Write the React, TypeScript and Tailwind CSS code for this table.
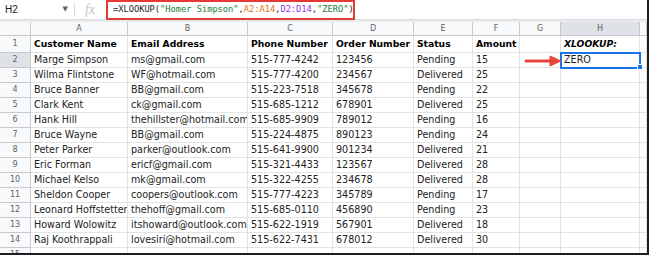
import React from "react";

const cols = ["A", "B", "C", "D", "E", "F", "G", "H", ""];

const rows: string[][] = [
  ["Marge Simpson", "ms@gmail.com", "515-777-4242", "123456", "Pending", "15"],
  ["Wilma Flintstone", "WF@hotmail.com", "515-777-4200", "234567", "Delivered", "25"],
  ["Bruce Banner", "BB@gmail.com", "515-223-7518", "345678", "Pending", "22"],
  ["Clark Kent", "ck@gmail.com", "515-685-1212", "678901", "Delivered", "25"],
  ["Hank Hill", "thehillster@hotmail.com", "515-685-9909", "789012", "Pending", "16"],
  ["Bruce Wayne", "BB@gmail.com", "515-224-4875", "890123", "Pending", "24"],
  ["Peter Parker", "parker@outlook.com", "515-641-9900", "901234", "Delivered", "21"],
  ["Eric Forman", "ericf@gmail.com", "515-321-4433", "123567", "Delivered", "28"],
  ["Michael Kelso", "mk@gmail.com", "515-322-4255", "234678", "Delivered", "28"],
  ["Sheldon Cooper", "coopers@outlook.com", "515-777-4223", "345789", "Pending", "17"],
  ["Leonard Hoffstetter", "thehoff@gmail.com", "515-685-0110", "456890", "Pending", "23"],
  ["Howard Wolowitz", "itshoward@outlook.com", "515-622-1919", "567901", "Delivered", "18"],
  ["Raj Koothrappali", "lovesiri@hotmail.com", "515-622-7431", "678012", "Delivered", "30"],
];

const headers = ["Customer Name", "Email Address", "Phone Number", "Order Number", "Status", "Amount"];

const gridCols = "grid grid-cols-[31px_97px_120px_85px_81px_59px_47px_41px_79px_1fr]";

const Cell: React.FC<{ children?: React.ReactNode; className?: string }> = ({ children, className = "" }) => (
  <div className={`border-r border-b border-[#e2e3e3] pl-[3px] flex items-center whitespace-nowrap overflow-hidden ${className}`}>
    {children}
  </div>
);

const RowNum: React.FC<{ n: number; active?: boolean }> = ({ n, active }) => (
  <div
    className={`border-r border-b border-[#c7c9cc] flex items-center justify-center text-[8px] text-[#5f6368] ${
      active ? "bg-[#dfe3e8]" : "bg-[#f8f9fa]"
    }`}
  >
    {n}
  </div>
);

export default function App() {
  return (
    <div className="w-[650px] h-[256px] bg-white overflow-hidden">
      <div
        className="relative w-[649px] h-[255px] border-r-2 border-b-2 border-[#1e1e1e] overflow-hidden text-[#222]"
        style={{ fontFamily: '"DejaVu Sans", Verdana, sans-serif' }}
      >
        {/* Formula bar */}
        <div className="h-[19px] flex items-center">
          <div className="w-[75px] flex items-center pl-[5px] pr-[6px] border-r border-[#dadce0] h-[14px]">
            <span className="text-[10px] text-[#202124]" style={{ fontFamily: '"Liberation Sans", Arial, sans-serif' }}>
              H2
            </span>
            <span className="ml-auto text-[7px] text-[#5f6368]">▼</span>
          </div>
          <div
            className="w-[30px] text-center italic text-[14px] text-[#c4c7c5]"
            style={{ fontFamily: '"Liberation Serif", serif' }}
          >
            fx
          </div>
          <div
            className="ml-[1px] h-[20px] w-[249px] border-2 border-[#e53935] flex items-center pl-[5px] text-[8.7px] whitespace-nowrap mt-[1px]"
            style={{ fontFamily: '"DejaVu Sans Mono", monospace' }}
          >
            <span>=XLOOKUP(</span>
            <span className="text-[#188038]">"Homer Simpson"</span>
            <span>,</span>
            <span className="text-[#e8710a]">A2:A14</span>
            <span>,</span>
            <span className="text-[#9334e6]">D2:D14</span>
            <span>,</span>
            <span className="text-[#188038]">"ZERO"</span>
            <span>)</span>
          </div>
        </div>
        <div className="h-[3px] bg-[#e8eaed] border-t border-[#dadce0]" />

        {/* Column headers */}
        <div className={`${gridCols} h-[14px]`}>
          <div className="bg-[#f8f9fa] border-r border-b border-[#c7c9cc]" />
          {cols.map((c, i) => (
            <div
              key={i}
              className={`border-r border-b border-[#c7c9cc] flex items-center justify-center text-[8px] text-[#5f6368] ${
                c === "H" ? "bg-[#dfe3e8]" : "bg-[#f8f9fa]"
              }`}
            >
              {c}
            </div>
          ))}
        </div>

        {/* Row 1 */}
        <div className={`${gridCols} h-[17px] text-[9.2px]`}>
          <RowNum n={1} />
          {headers.map((h) => (
            <Cell key={h} className="font-bold text-black">
              {h}
            </Cell>
          ))}
          <Cell />
          <Cell className="font-bold italic text-black">XLOOKUP:</Cell>
          <Cell />
        </div>

        {/* Data rows */}
        {rows.map((r, i) => (
          <div key={i} className={`${gridCols} h-[15px] text-[9.6px]`}>
            <RowNum n={i + 2} active={i === 0} />
            {r.map((v, j) => (
              <Cell key={j}>{v}</Cell>
            ))}
            <Cell />
            <Cell>{i === 0 ? "ZERO" : ""}</Cell>
            <Cell />
          </div>
        ))}

        <div className={`${gridCols} h-[15px]`}>
          <RowNum n={15} />
          {cols.map((_, j) => (
            <Cell key={j} />
          ))}
        </div>

        {/* Selection on H2 */}
        <div className="absolute left-[560px] top-[52px] w-[81px] h-[17px] border-2 border-[#1a73e8] pointer-events-none" />
        <div className="absolute left-[637px] top-[64px] w-[6px] h-[6px] bg-[#1a73e8] border border-white" />

        {/* Red arrow */}
        <svg className="absolute left-[523px] top-[55px]" width="40" height="12" viewBox="0 0 40 12">
          <line x1="3" y1="6" x2="29" y2="6" stroke="#e8453c" strokeWidth="3" strokeLinecap="round" />
          <path d="M27 1 L38 6 L27 11 Z" fill="#e8453c" stroke="#e8453c" strokeWidth="1" strokeLinejoin="round" />
        </svg>
      </div>
    </div>
  );
}
